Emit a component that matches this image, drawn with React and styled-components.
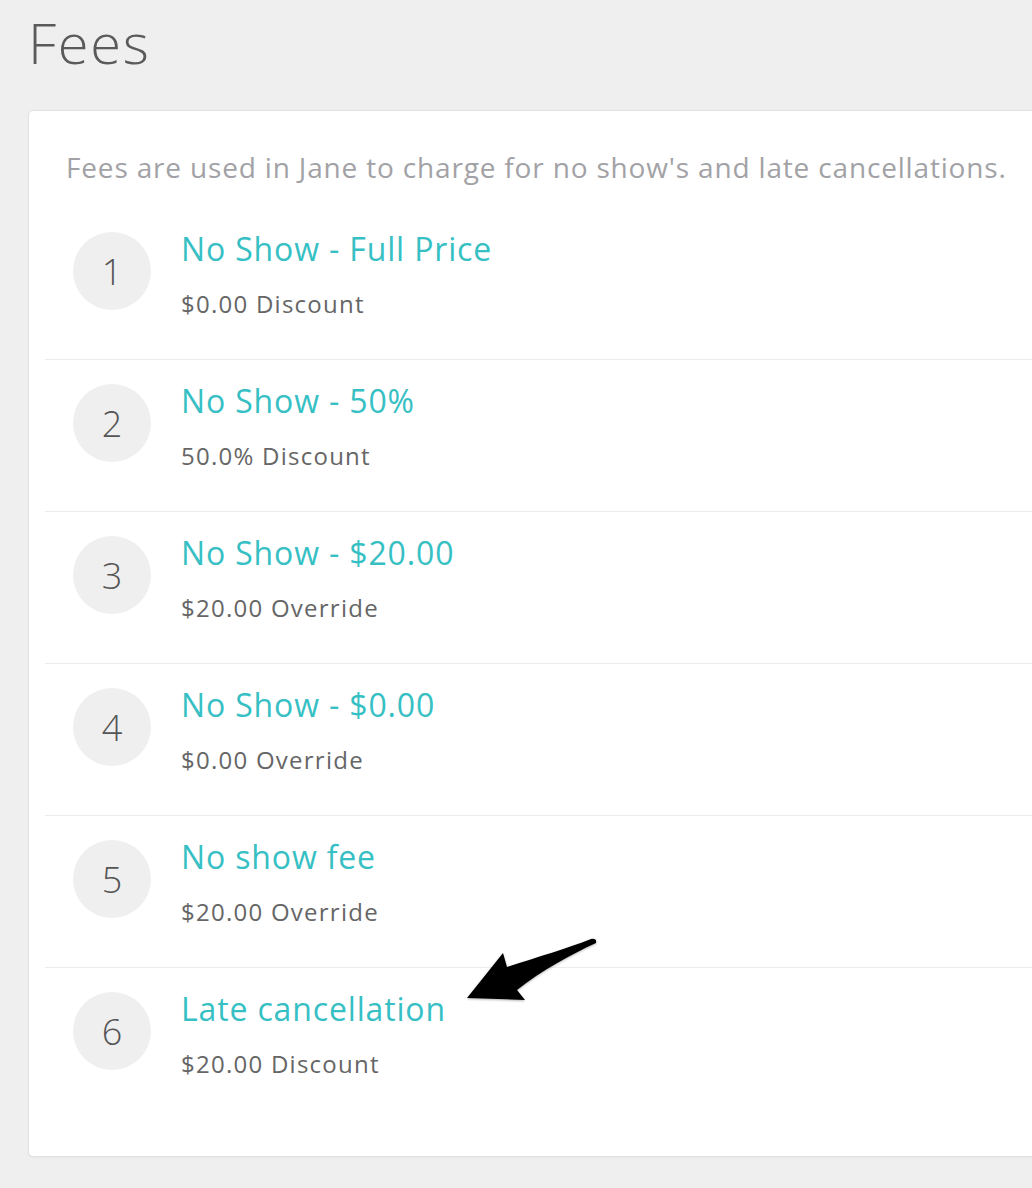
import React from "react";
import styled, { createGlobalStyle } from "styled-components";

const fees = [
  { name: "No Show - Full Price", detail: "$0.00 Discount" },
  { name: "No Show - 50%", detail: "50.0% Discount" },
  { name: "No Show - $20.00", detail: "$20.00 Override" },
  { name: "No Show - $0.00", detail: "$0.00 Override" },
  { name: "No show fee", detail: "$20.00 Override" },
  { name: "Late cancellation", detail: "$20.00 Discount" },
];

export default function App() {
  return (
    <>
      <GlobalStyle />
      <Page>
        <Heading>Fees</Heading>
        <Card>
          <Description>
            Fees are used in Jane to charge for no show's and late cancellations.
          </Description>
          <List>
            {fees.map((fee, i) => (
              <Row key={fee.name}>
                <Badge>{i + 1}</Badge>
                <Info>
                  <FeeName href="#">{fee.name}</FeeName>
                  <FeeDetail>{fee.detail}</FeeDetail>
                </Info>
              </Row>
            ))}
          </List>
        </Card>
        <Arrow viewBox="0 0 145 80" width="145" height="80">
          <path
            d="M7,68 L43,23 L47,37 C78,27 108,18 131,9 Q137,8 136,13 C112,24 82,40 57,60 L65,70 Z"
            fill="#000"
          />
        </Arrow>
      </Page>
    </>
  );
}

const GlobalStyle = createGlobalStyle`
body{
  margin: 0;
  background: #efefef;
  overflow: hidden;
  font-family: "Open Sans", Lato, sans-serif;
}
`

const Page = styled.div`
position: relative;
padding: 14px 0 0 28px;
height: 1188px;
box-sizing: border-box;
`

const Heading = styled.h1`
margin: 0 0 40px 0;
font-size: 56px;
line-height: 56px;
font-weight: 300;
letter-spacing: 1.7px;
color: #5a5a5a;
`

const Card = styled.div`
width: 1060px;
background: #fff;
border: 1px solid #e2e2e2;
border-radius: 5px;
box-shadow: 0 1px 2px rgba(0,0,0,0.04);
padding: 36px 0 37px 0;
`

const Description = styled.p`
margin: 0 0 21px 37px;
font-size: 28px;
line-height: 40px;
letter-spacing: 0.83px;
color: #a2a2a6;
`

const List = styled.div`
margin-left: 16px;
`

const Row = styled.div`
display: flex;
align-items: flex-start;
gap: 30px;
padding: 24px 28px 39px;
border-bottom: 1px solid #ececec;
&:last-child{
  border-bottom: none;
}
`

const Badge = styled.div`
width: 78px;
height: 78px;
flex-shrink: 0;
border-radius: 50%;
background: #efefef;
display: flex;
align-items: center;
justify-content: center;
font-size: 36px;
font-weight: 300;
color: #555;
`

const Info = styled.div`
display: flex;
flex-direction: column;
margin-top: -3px;
`

const FeeName = styled.a`
font-size: 32px;
line-height: 40px;
letter-spacing: 0.85px;
color: #36c0c4;
text-decoration: none;
margin-bottom: 19px;
`

const FeeDetail = styled.div`
font-size: 24px;
line-height: 32px;
letter-spacing: 1.25px;
color: #666;
`

const Arrow = styled.svg`
position: absolute;
left: 460px;
top: 930px;
filter: drop-shadow(0 1px 1px rgba(0,0,0,0.3));
`
